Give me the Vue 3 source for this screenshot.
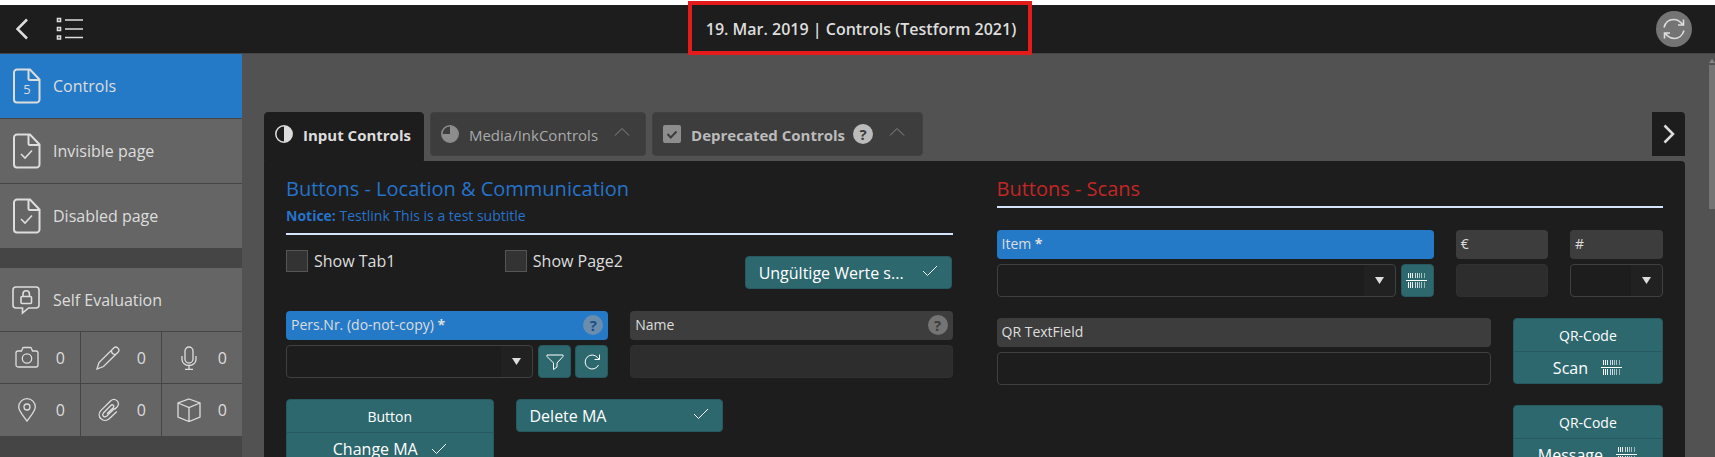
<script setup>
import { ref } from 'vue'

const pages = [
  { label: 'Controls', badge: '5', active: true },
  { label: 'Invisible page' },
  { label: 'Disabled page' },
]
const counters = ref([
  { icon: 'camera', name: 'Photos', count: 0 },
  { icon: 'pencil', name: 'Drawings', count: 0 },
  { icon: 'mic', name: 'Recordings', count: 0 },
  { icon: 'pin', name: 'Locations', count: 0 },
  { icon: 'clip', name: 'Attachments', count: 0 },
  { icon: 'cube', name: 'Objects', count: 0 },
])
const scans = ['Scan', 'Message']
// x offset and opacity of each barcode stripe
const stripes = [[3, 1], [5, 1], [7, 0.9], [10, 0.75], [12, 0.8], [14, 0.6], [16, 0.6], [19, 0.5]]
</script>

<template>
  <div class="app">
    <header class="topbar">
      <div class="side">
        <button class="plain" aria-label="Back">
          <svg width="12" height="22" viewBox="0 0 12 22"><path d="M11 1.500 1.500 11 11 20.500" class="thick" /></svg>
        </button>
        <button class="plain list" aria-label="Page list">
          <svg width="28" height="24" viewBox="0 0 28 24">
            <path d="M1.500 1.500h3v3h-3zM1.500 10.500h3v3h-3zM1.500 19h3v3h-3z" class="mid" />
            <path d="M9 3h18M9 12h18M9 20.500h18" class="mid" />
          </svg>
        </button>
      </div>
      <h1>19. Mar. 2019 | Controls (Testform 2021)</h1>
      <div class="side end">
        <button class="refresh" aria-label="Synchronise">
          <svg width="24" height="24" viewBox="0 0 24 24">
            <path d="M2 10.500C3.500 5 7.500 2.500 11.500 2.500c4 0 7 2 9.500 5.500M21.500 2.500v5.500h-5.500M22 13.500c-1.500 5-5.500 8-9.500 8-4 0-7-2-9.500-5.500M2.500 21.500v-5.500h5.500" class="mid" />
          </svg>
        </button>
      </div>
    </header>

    <div class="body">
      <nav class="sidebar">
        <a v-for="p in pages" :key="p.label" href="#" class="page" :class="{ active: p.active }">
          <svg width="28" height="36" viewBox="0 0 28 36">
            <path d="M4 1.500h13l9.500 10v20a3 3 0 0 1-3 3H4a3 3 0 0 1-3-3v-27a3 3 0 0 1 3-3zM15.500 2v8.500a1.500 1.500 0 0 0 1.500 1.500h9" class="page-line" />
            <path v-if="!p.badge" d="M8 21l4 4 7-7.500" class="mid" />
            <text v-else x="14" y="26" text-anchor="middle">{{ p.badge }}</text>
          </svg>
          <span>{{ p.label }}</span>
        </a>
        <a href="#" class="page evaluation">
          <svg width="28" height="30" viewBox="0 0 28 30">
            <path d="M4 2h20a3 3 0 0 1 3 3v15a3 3 0 0 1-3 3h-7.500l-6 5v-5H4a3 3 0 0 1-3-3V5a3 3 0 0 1 3-3z" class="mid" />
            <path d="M10 11.500h8.500a1 1 0 0 1 1 1v5a1 1 0 0 1-1 1H10a1 1 0 0 1-1-1v-5a1 1 0 0 1 1-1zM11 11V9a3.200 3.200 0 0 1 6.400 0v2" class="mid" />
          </svg>
          <span>Self Evaluation</span>
        </a>
        <div class="counters">
          <button v-for="c in counters" :key="c.icon" :aria-label="c.name">
            <svg width="24" height="24" viewBox="0 0 24 24" class="thin">
              <template v-if="c.icon === 'camera'">
                <path d="M3 5h3.500l1-2.500c.2-.6.500-1 1.200-1h6.600c.7 0 1 .4 1.200 1l1 2.500H21a2 2 0 0 1 2 2v12a2 2 0 0 1-2 2H3a2 2 0 0 1-2-2V7a2 2 0 0 1 2-2z" />
                <circle cx="12" cy="12.500" r="4.700" />
              </template>
              <path v-else-if="c.icon === 'pencil'" d="M1 23l2-6.500L18 1.800c1.200-1.100 2.500-1 3.500 0l.7.700c1 1 1 2.300 0 3.500L7.500 20.500zM15.500 4.500c0 2.500 1.500 4 4 4" />
              <template v-else-if="c.icon === 'mic'">
                <rect x="8" y="1" width="8" height="16" rx="4" />
                <path d="M5 10v3.500a7 6 0 0 0 14 0V10M12 19.500V23M8 23.500h8" />
              </template>
              <template v-else-if="c.icon === 'pin'">
                <path d="M12 23C8 17.500 3.700 13 3.700 9a8.300 8.300 0 0 1 16.600 0c0 4-4.300 8.500-8.300 14z" />
                <circle cx="12" cy="9" r="3" />
              </template>
              <path v-else-if="c.icon === 'clip'" d="M18.500 10.500 10.800 18c-2.500 2.200-5.500-.5-3.200-3.200l7.200-7.300c1.900-1.700 4 .3 2.400 2.200L11 15.800M20.800 13.500l-7.300 7C7.500 26 -.2 18.500 4.800 12.600L14.500 3c4.500-4.200 10.500 1.200 6.500 6l-2.500 2.500" />
              <path v-else d="M12 1l11 4v14l-11 4.500L1 19V5zM1 5l11 4.500L23 5M12 9.500v14" />
            </svg>
            <span>{{ c.count }}</span>
          </button>
        </div>
      </nav>

      <main>
        <div class="tabs">
          <button class="tab active">
            <svg width="18" height="18" viewBox="0 0 18 18"><circle cx="9" cy="9" r="8.200" class="ring" /><path d="M9 1a8 8 0 0 1 0 16z" class="solid" /></svg>
            <span>Input Controls</span>
          </button>
          <button class="tab">
            <svg width="18" height="18" viewBox="0 0 18 18" class="dim"><circle cx="9" cy="9" r="8.200" class="ring" /><path d="M9 1a8 8 0 1 1-8 8h8z" class="solid" /></svg>
            <span>Media/InkControls</span>
            <svg width="16" height="10" viewBox="0 0 16 10" class="caret"><path d="M1 8.500l7-7 7 7" /></svg>
          </button>
          <button class="tab bold">
            <svg width="18" height="18" viewBox="0 0 18 18" class="dim"><rect width="18" height="18" rx="2" class="solid" /><path d="M4.500 9l3.300 3.500 5.700-6" class="cut" /></svg>
            <span>Deprecated Controls</span>
            <i class="help">?</i>
            <svg width="16" height="10" viewBox="0 0 16 10" class="caret"><path d="M1 8.500l7-7 7 7" /></svg>
          </button>
          <button class="next" aria-label="Next tab">
            <svg width="12" height="20" viewBox="0 0 12 20"><path d="M1.500 1.500 10 10l-8.500 8.500" class="thick" /></svg>
          </button>
        </div>

        <div class="panel">
          <section>
            <div class="heading">
              <h2>Buttons - Location &amp; Communication</h2>
              <p><b>Notice:</b> <a href="#">Testlink</a> This is a test subtitle</p>
            </div>
            <div class="rows">
              <div class="checks">
                <label><input type="checkbox" /><span>Show Tab1</span></label>
                <label><input type="checkbox" /><span>Show Page2</span></label>
                <button class="teal action"><span>Ungültige Werte s...</span>
                  <svg width="16" height="12" viewBox="0 0 16 12"><path d="M1 6l4.500 4.500L15 1" /></svg>
                </button>
              </div>
              <div class="halves">
                <div class="field">
                  <label for="pers" class="required"><span>Pers.Nr. (do-not-copy) <b>*</b></span><i class="help">?</i></label>
                  <div class="line">
                    <div class="drop"><select id="pers"></select><svg width="9" height="7" viewBox="0 0 9 7"><path d="M0 0h9L4.500 7z" /></svg></div>
                    <button class="teal square" aria-label="Filter">
                      <svg width="18" height="18" viewBox="0 0 18 18"><path d="M1 2h16v1.500L11 10v4l-3.500 2.500V10L1 3.500z" /></svg>
                    </button>
                    <button class="teal square" aria-label="Reload">
                      <svg width="18" height="18" viewBox="0 0 18 18"><path d="M15.500 12A7 7 0 1 1 14.500 4.500l1.500 1.700M16.500 1.500v5h-5" /></svg>
                    </button>
                  </div>
                </div>
                <div class="field">
                  <label for="name">Name<i class="help">?</i></label>
                  <input id="name" type="text" disabled />
                </div>
              </div>
              <div class="thirds">
                <button class="teal group">
                  <span class="cap">Button</span>
                  <span class="act">Change MA <svg width="16" height="12" viewBox="0 0 16 12"><path d="M1 6l4.500 4.500L15 1" /></svg></span>
                </button>
                <button class="teal action"><span>Delete MA</span>
                  <svg width="16" height="12" viewBox="0 0 16 12"><path d="M1 6l4.500 4.500L15 1" /></svg>
                </button>
              </div>
            </div>
          </section>

          <section>
            <div class="heading red"><h2>Buttons - Scans</h2></div>
            <div class="rows">
              <div class="items">
                <div class="field">
                  <label for="item" class="required"><span>Item <b>*</b></span></label>
                  <div class="line">
                    <div class="drop"><select id="item"></select><svg width="9" height="7" viewBox="0 0 9 7"><path d="M0 0h9L4.500 7z" /></svg></div>
                    <button class="teal square" aria-label="Scan item">
                      <svg width="22" height="18" viewBox="0 0 22 18" class="bars">
                        <rect v-for="[x, o] in stripes" :key="x" :x="x - 1" y="1" width="1" height="5" :opacity="o" />
                        <rect v-for="[x, o] in stripes" :key="x + 'b'" :x="x - 1" y="10" width="1" height="6" :opacity="o" />
                        <rect x="0" y="8" width="21" height="1" />
                      </svg>
                    </button>
                  </div>
                </div>
                <div class="field">
                  <label for="price">€</label>
                  <input id="price" type="text" disabled />
                </div>
                <div class="field">
                  <label for="amount">#</label>
                  <div class="drop"><select id="amount"></select><svg width="9" height="7" viewBox="0 0 9 7"><path d="M0 0h9L4.500 7z" /></svg></div>
                </div>
              </div>
              <div class="codes">
                <div class="field">
                  <label for="qr">QR TextField</label>
                  <input id="qr" type="text" />
                </div>
                <div class="stack">
                  <button v-for="s in scans" :key="s" class="teal group">
                    <span class="cap">QR-Code</span>
                    <span class="act">{{ s }}
                      <svg width="22" height="18" viewBox="0 0 22 18" class="bars">
                        <rect v-for="[x, o] in stripes" :key="x" :x="x - 1" y="1" width="1" height="5" :opacity="o" />
                        <rect v-for="[x, o] in stripes" :key="x + 'b'" :x="x - 1" y="10" width="1" height="6" :opacity="o" />
                        <rect x="0" y="8" width="21" height="1" />
                      </svg>
                    </span>
                  </button>
                </div>
              </div>
            </div>
          </section>
        </div>
      </main>
      <div class="scroll"><svg width="6" height="4" viewBox="0 0 6 4"><path d="M0 4l3-4 3 4z" /></svg><div class="thumb"></div></div>
    </div>
  </div>
</template>

<style>
body { margin: 0; background: #fff; }
</style>

<style scoped>
* { box-sizing: border-box; }
.app { display: flex; flex-direction: column; height: 100vh; padding-top: 5px; overflow: hidden; font: 16px/22px "Open Sans", "Noto Sans", sans-serif; color: #ddd; }
button, input, select { font: inherit; color: inherit; margin: 0; padding: 0; border: 0; }
button { cursor: pointer; }
svg { display: block; flex: none; fill: none; stroke: currentColor; }
h1, h2, p { margin: 0; font-weight: 400; }
a { color: inherit; text-decoration: none; }
.thick { stroke-width: 2.500; }
.mid { stroke-width: 1.600; }
.page-line { stroke-width: 2; }
.thin { stroke-width: 1.300; }
.solid { fill: currentColor; stroke: none; }

.topbar { flex: none; display: grid; grid-template-columns: 1fr auto 1fr; align-items: center; height: 49px; padding: 0 9px 0 16px; background: #1d1d1d; border-bottom: 1px solid #454545; }
.topbar h1 { position: relative; font-size: 16px; font-weight: 600; }
.topbar h1::after { content: ""; position: absolute; inset: -17px -16px -15px -18px; border: 4px solid #e31b1b; }
.side { display: flex; align-items: center; }
.side.end { justify-content: flex-end; padding-right: 14px; }
.plain { background: none; }
.list { margin-left: 28px; }
.refresh { display: grid; place-items: center; width: 36px; height: 36px; border-radius: 50%; background: #747474; }

.body { flex: 1; min-height: 0; display: flex; background: #525252; }
.sidebar { flex: none; width: 242px; background: #454545; }
.page { display: flex; align-items: center; gap: 12px; height: 65px; padding-left: 13px; background: #656565; border-bottom: 1px solid #454545; }
.page.active { background: #257ac7; }
.page text { font-size: 13px; fill: currentColor; stroke: none; }
.evaluation { gap: 13px; height: 64px; margin-top: 19px; padding-left: 12px; }
.counters { display: grid; grid-template-columns: repeat(3, 1fr); gap: 1px; }
.counters button { display: flex; align-items: center; justify-content: space-between; height: 52px; padding: 0 15px; background: #656565; }
.counters button:nth-child(-n + 3) { height: 51px; }

main { flex: 1; min-width: 0; padding: 58px 24px 0 22px; overflow: hidden; display: flex; flex-direction: column; }
.tabs { display: flex; gap: 6px; flex: none; align-items: flex-start; }
.tab { display: flex; align-items: center; height: 44px; margin-bottom: 5px; padding: 0 15px 0 10px; border: 1px solid #414141; border-radius: 4px; background: #3d3d3d; font-size: 15px; color: #aaa; }
.tab span { margin-left: 10px; padding-top: 2px; }
.tab.active { height: 49px; margin: 0; padding: 0 12px 5px 10px; border-color: #1d1d1d; border-radius: 4px 4px 0 0; background: #1d1d1d; font-weight: 700; color: #ddd; }
.tab.bold { padding-right: 17px; font-weight: 700; color: #bbb; }
.ring { stroke-width: 1.500; }
.dim { color: #8d8d8d; }
.cut { stroke: #3d3d3d; stroke-width: 2; }
.caret { margin: 0 0 4px 16px; color: #888; }
.help { display: grid; place-items: center; width: 20px; height: 20px; border-radius: 50%; background: #bbb; color: #3d3d3d; font: 700 15px/20px "Open Sans", sans-serif; }
.tab .help { margin-left: 8px; }
.next { display: grid; place-items: center; width: 33px; height: 44px; margin-left: auto; border-radius: 0 4px 0 0; background: #1d1d1d; }

.panel { flex: 1; display: grid; grid-template-columns: 1fr 1fr; gap: 44px; padding: 14px 22px 0; border-radius: 0 4px 0 0; background: #1d1d1d; }
.heading { padding-bottom: 7px; margin-bottom: 15px; border-bottom: 2px solid #d5e4fa; color: #2673cb; }
.heading.red { padding-bottom: 3px; margin-bottom: 22px; color: #c32626; }
.heading h2 { font-size: 20px; line-height: 28px; }
.heading p { margin-top: 3px; font-size: 14px; line-height: 20px; }
.rows { display: flex; flex-direction: column; gap: 21px; }
.checks { display: grid; grid-template-columns: 219fr 240fr 208fr; align-items: start; height: 40px; }
.checks label { display: flex; align-items: center; gap: 6px; }
.checks input { appearance: none; width: 22px; height: 22px; border: 1px solid #555; background: #333; }
.checks .teal { margin-top: 6px; }
.halves { display: grid; grid-template-columns: 1fr 1fr; gap: 22px; }
.thirds { display: grid; grid-template-columns: repeat(3, 1fr); gap: 22px; align-items: start; }
.items { display: grid; grid-template-columns: 437fr 92fr 93fr; gap: 22px; }
.codes { display: grid; grid-template-columns: 494fr 150fr; gap: 22px; }
.stack { display: flex; flex-direction: column; gap: 21px; }
.field { display: flex; flex-direction: column; gap: 5px; min-width: 0; }
.field label { display: flex; justify-content: space-between; height: 29px; padding: 4px 5px; border-radius: 4px; background: #3d3d3d; font-size: 14px; line-height: 20px; }
.field label.required { background: #257ac7; }
.field .help { background: #747474; }
.required .help { background: #6a8dae; color: #1d4f85; }
.field input, select { width: 100%; height: 33px; padding: 0 8px; border: 1px solid #404040; border-radius: 4px; background: #1d1d1d; }
.field input:disabled { background: #2d2d2d; border-color: #303030; }
.line { display: flex; gap: 4px; }
.line .drop { margin-right: 1px; }
.drop { position: relative; flex: 1; min-width: 0; }
select { display: block; appearance: none; background: linear-gradient(#212121, #212121) right / 31px 100% no-repeat #1d1d1d; }
.drop svg { position: absolute; right: 12px; top: 13px; fill: #ddd; stroke: none; pointer-events: none; }
.teal { border: 1px solid #275a5f; border-radius: 4px; background: #2d686e; color: #fff; }
.square { display: grid; place-items: center; width: 33px; height: 33px; }
.action { display: flex; align-items: center; justify-content: space-between; height: 33px; padding: 0 13px; }
.action svg { margin-bottom: 3px; }
.group { display: block; height: 66px; }
.cap { display: block; height: 33px; border-bottom: 1px solid #275a5f; font-size: 14px; line-height: 34px; }
.act { display: flex; align-items: center; justify-content: center; gap: 13px; height: 31px; }
.bars { fill: currentColor; stroke: none; }

.scroll { display: flex; flex-direction: column; align-items: center; flex: none; width: 6px; padding-top: 5px; gap: 2px; }
.scroll svg { fill: #888; stroke: none; }
.thumb { width: 6px; height: 144px; background: #747474; }
</style>
